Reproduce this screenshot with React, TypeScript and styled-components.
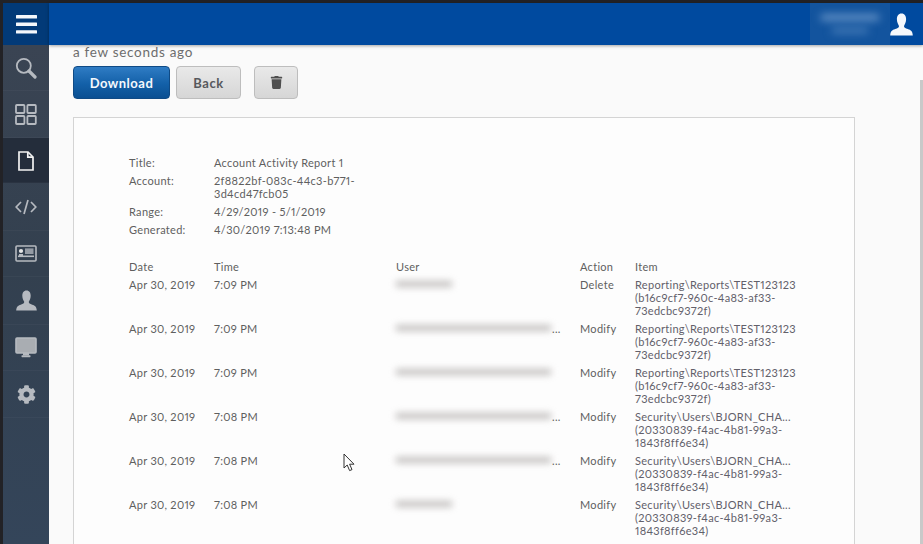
import { FaCog, FaTrash } from "react-icons/fa";
import styled, { createGlobalStyle } from "styled-components";

const Global = createGlobalStyle`
  html, body { margin: 0; padding: 0; height: 544px; overflow: hidden; background: #222; }
  body { font-family: "Lato", "Liberation Sans", sans-serif; font-variant-numeric: proportional-nums; }
`;

const Shell = styled.div`
  width: 923px;
  height: 544px;
  padding: 3px 0 0 3px;
  box-sizing: border-box;
  background: #222226;
  display: grid;
  grid-template-columns: 46px 1fr;
  grid-template-rows: 42px 1fr;
  overflow: hidden;
`;

const MenuCell = styled.div`
  background: #023a78;
  display: flex;
  align-items: center;
  justify-content: center;
`;

const Header = styled.header`
  background: #004a9f;
  display: flex;
  justify-content: flex-end;
  align-items: center;
  padding-right: 10px;
  box-shadow: 0 1px 3px rgba(0, 0, 0, 0.35);
  position: relative;
  z-index: 2;
`;

const UserBlock = styled.div`
  width: 80px;
  height: 42px;
  background: #13549e;
  display: flex;
  flex-direction: column;
  align-items: center;
  gap: 8px;
  padding-top: 12px;
  box-sizing: border-box;
  overflow: hidden;
`;

const BlurLine = styled.div<{ $w: number; $tone: string }>`
  width: ${(p) => p.$w}px;
  height: 5px;
  background: ${(p) => p.$tone};
  filter: blur(4px);
`;

const HeaderPerson = styled.div`
  color: #f5f8fc;
  margin-top: 1px;
  line-height: 0;
`;

const Sidebar = styled.nav`
  background: linear-gradient(180deg, #3a4453 0%, #33404f 45%, #34455a 100%);
  display: flex;
  flex-direction: column;
`;

const NavItem = styled.div<{ $active?: boolean; $h: number }>`
  height: ${(p) => p.$h}px;
  display: flex;
  align-items: center;
  justify-content: center;
  color: ${(p) => (p.$active ? "#f2f2f2" : "#b6bac0")};
  background: ${(p) => (p.$active ? "#242d3b" : "transparent")};
  border-bottom: 1px solid rgba(255, 255, 255, 0.03);
  box-sizing: border-box;
`;

const Main = styled.main`
  background: #fafafa;
  padding: 0 68px 0 24px;
  position: relative;
  overflow: hidden;
`;

const Ago = styled.div`
  font-size: 13.5px;
  line-height: 14px;
  color: #6d6d6d;
  letter-spacing: 0.7px;
`;

const Toolbar = styled.div`
  display: flex;
  margin-top: 7px;
`;

const Button = styled.button<{ $primary?: boolean; $w: number; $ml: number }>`
  width: ${(p) => p.$w}px;
  margin-left: ${(p) => p.$ml}px;
  height: 33px;
  border-radius: 4px;
  font-family: inherit;
  font-size: 13px;
  font-weight: 700;
  letter-spacing: 0.5px;
  padding: 0;
  display: flex;
  align-items: center;
  justify-content: center;
  color: ${(p) => (p.$primary ? "#f4f8fc" : "#56585c")};
  background: ${(p) =>
    p.$primary
      ? "linear-gradient(180deg, #2f7cc4 0%, #1360a8 55%, #0a4f92 100%)"
      : "linear-gradient(180deg, #e9e9e9 0%, #d6d6d6 100%)"};
  border: 1px solid ${(p) => (p.$primary ? "#0f4a85" : "#bdbdbd")};
`;

const Card = styled.section`
  margin-top: 18px;
  background: #fdfdfd;
  border: 1px solid #d4d4d4;
  border-bottom: 0;
  height: 460px;
  padding: 38px 0 0 55px;
  box-sizing: border-box;
  color: #5f5f5f;
  font-size: 11px;
  line-height: 13px;
  letter-spacing: 0.3px;
`;

const Meta = styled.div`
  display: grid;
  grid-template-columns: 85px 146px;
  row-gap: 5px;
`;

const Rows = styled.div`
  margin-top: 24px;
  width: 672px;
  display: grid;
  grid-template-columns: 85px 182px 184px 55px 166px;
  row-gap: 5px;
`;

const Row = styled.div`
  display: contents;
`;

const Item = styled.div`
  white-space: pre-line;
  overflow-wrap: anywhere;
  color: #62606a;
`;

const UserCell = styled.div`
  display: flex;
  align-items: flex-start;
  height: 26px;
  width: 170px;
  position: relative;
`;

const BlurName = styled.span<{ $w: number }>`
  width: ${(p) => p.$w}px;
  height: 6px;
  margin-top: 3px;
  background: #c2bfbe;
  filter: blur(3.5px);
`;

const Dots = styled.span`
  position: absolute;
  left: 156px;
  top: 0;
`;

const Pointer = styled.svg`
  position: absolute;
  left: 294px;
  top: 408px;
`;

const Scrollbar = styled.div`
  position: absolute;
  right: 0;
  top: 35px;
  bottom: 0;
  width: 3px;
  background: #c9c9c9;
`;

const DocIcon = styled.svg`
  margin-top: 2px;
`;

const Menu = () => (
  <svg width="21" height="19" viewBox="0 0 21 19" fill="#f4f7fb">
    <rect y="0" width="21" height="3.4" rx="0.5" />
    <rect y="7.6" width="21" height="3.4" rx="0.5" />
    <rect y="15.2" width="21" height="3.4" rx="0.5" />
  </svg>
);

const Search = () => (
  <svg width="22" height="22" viewBox="0 0 22 22" fill="none" stroke="currentColor">
    <circle cx="8.8" cy="8.8" r="7" strokeWidth="1.8" />
    <path d="M14 14 L20 20" strokeWidth="3.2" strokeLinecap="round" />
  </svg>
);

const Tiles = () => (
  <svg width="22" height="21" viewBox="0 0 22 21" fill="none" stroke="currentColor" strokeWidth="1.8">
    <rect x="1" y="1" width="8.4" height="8" rx="0.8" />
    <rect x="12.4" y="1" width="8.4" height="8" rx="0.8" />
    <rect x="1" y="12" width="8.4" height="8" rx="0.8" />
    <rect x="12.4" y="12" width="8.4" height="8" rx="0.8" />
  </svg>
);

const Doc = () => (
  <DocIcon width="16" height="20" viewBox="0 0 16 20" fill="none" stroke="currentColor" strokeWidth="1.7">
    <path d="M1 1 H10 L15 6 V19 H1 Z" />
    <path d="M9.8 1 V6.2 H15" />
  </DocIcon>
);

const Code = () => (
  <svg width="22" height="16" viewBox="0 0 22 16" fill="none" stroke="currentColor" strokeWidth="1.7">
    <path d="M6 3 L1.2 8 L6 13" />
    <path d="M16 3 L20.8 8 L16 13" />
    <path d="M13 1 L9 15" />
  </svg>
);

const IdCard = () => (
  <svg width="22" height="17" viewBox="0 0 22 17">
    <rect x="1" y="1" width="20" height="15" rx="1" fill="none" stroke="currentColor" strokeWidth="1.6" />
    <circle cx="6" cy="6" r="2.1" fill="#e6e6e6" />
    <rect x="10" y="3.4" width="8.5" height="5.6" fill="currentColor" opacity="0.75" />
    <rect x="3" y="10.5" width="16" height="1.6" fill="currentColor" />
    <rect x="4" y="9" width="4" height="2" fill="currentColor" />
  </svg>
);

const Person = ({ size = 21 }: { size?: number }) => (
  <svg width={size} height={size} viewBox="0 0 22 22" fill="currentColor">
    <path d="M11 0.5 C14 0.5 15.4 3 15.4 6 C15.4 9 14 11.2 13.4 12.4 C13.2 13.8 14.6 14.6 17 15.4 C20 16.4 21.6 17.6 21.8 21.5 H0.2 C0.4 17.6 2 16.4 5 15.4 C7.4 14.6 8.8 13.8 8.6 12.4 C8 11.2 6.6 9 6.6 6 C6.6 3 8 0.5 11 0.5 Z" />
  </svg>
);

const Monitor = () => (
  <svg width="22" height="21" viewBox="0 0 22 21">
    <rect x="1" y="1" width="20" height="15" rx="1" fill="#a9adb2" stroke="currentColor" strokeWidth="1.6" />
    <rect x="8" y="16" width="6" height="2.4" fill="currentColor" />
    <rect x="6.5" y="18.2" width="9" height="2" rx="0.6" fill="currentColor" />
  </svg>
);

type Entry = { user: number; dots?: boolean; action: string; first: string; rest: string };

const reports = "(b16c9cf7-960c-4a83-af33-\n73edcbc9372f)";
const security = "(20330839-f4ac-4b81-99a3-\n1843f8ff6e34)";

const entries: Entry[] = [
  { user: 56, action: "Delete", first: "Reporting\\Reports\\TEST123123", rest: reports },
  { user: 155, dots: true, action: "Modify", first: "Reporting\\Reports\\TEST123123", rest: reports },
  { user: 155, action: "Modify", first: "Reporting\\Reports\\TEST123123", rest: reports },
  { user: 155, dots: true, action: "Modify", first: "Security\\Users\\BJORN_CHA...", rest: security },
  { user: 155, dots: true, action: "Modify", first: "Security\\Users\\BJORN_CHA...", rest: security },
  { user: 56, action: "Modify", first: "Security\\Users\\BJORN_CHA...", rest: security },
];

const times = ["7:09 PM", "7:09 PM", "7:09 PM", "7:08 PM", "7:08 PM", "7:08 PM"];

export default function App() {
  return (
    <>
      <Global />
      <Shell>
        <MenuCell>
          <Menu />
        </MenuCell>
        <Header>
          <UserBlock>
            <BlurLine $w={58} $tone="#7ea6d4" />
            <BlurLine $w={36} $tone="#4f83bd" />
          </UserBlock>
          <HeaderPerson>
            <Person size={23} />
          </HeaderPerson>
        </Header>
        <Sidebar>
          <NavItem $h={46}><Search /></NavItem>
          <NavItem $h={47}><Tiles /></NavItem>
          <NavItem $active $h={45}><Doc /></NavItem>
          <NavItem $h={48}><Code /></NavItem>
          <NavItem $h={46}><IdCard /></NavItem>
          <NavItem $h={48}><Person /></NavItem>
          <NavItem $h={46}><Monitor /></NavItem>
          <NavItem $h={47}><FaCog size={19} /></NavItem>
        </Sidebar>
        <Main>
          <Ago>a few seconds ago</Ago>
          <Toolbar>
            <Button $primary $w={97} $ml={0}>Download</Button>
            <Button $w={65} $ml={6}>Back</Button>
            <Button $w={44} $ml={13}><FaTrash size={13} color="#4f4f4f" /></Button>
          </Toolbar>
          <Card>
            <Meta>
              <span>Title:</span><span>Account Activity Report 1</span>
              <span>Account:</span><span>2f8822bf-083c-44c3-b771-3d4cd47fcb05</span>
              <span>Range:</span><span>4/29/2019 - 5/1/2019</span>
              <span>Generated:</span><span>4/30/2019 7:13:48 PM</span>
            </Meta>
            <Rows>
              <span>Date</span><span>Time</span><span>User</span><span>Action</span><span>Item</span>
              {entries.map((r, i) => (
                <Row key={i}>
                  <span>Apr 30, 2019</span>
                  <span>{times[i]}</span>
                  <UserCell>
                    <BlurName $w={r.user} />
                    {r.dots && <Dots>...</Dots>}
                  </UserCell>
                  <span>{r.action}</span>
                  <Item>{r.first + "\n" + r.rest}</Item>
                </Row>
              ))}
            </Rows>
          </Card>
          <Pointer width="13" height="19" viewBox="0 0 13 19">
            <path d="M1 1 V15 L4.2 12 L6.6 17.6 L9 16.6 L6.6 11.2 H11 Z" fill="#fff" stroke="#333" strokeWidth="1" />
          </Pointer>
          <Scrollbar />
        </Main>
      </Shell>
    </>
  );
}
